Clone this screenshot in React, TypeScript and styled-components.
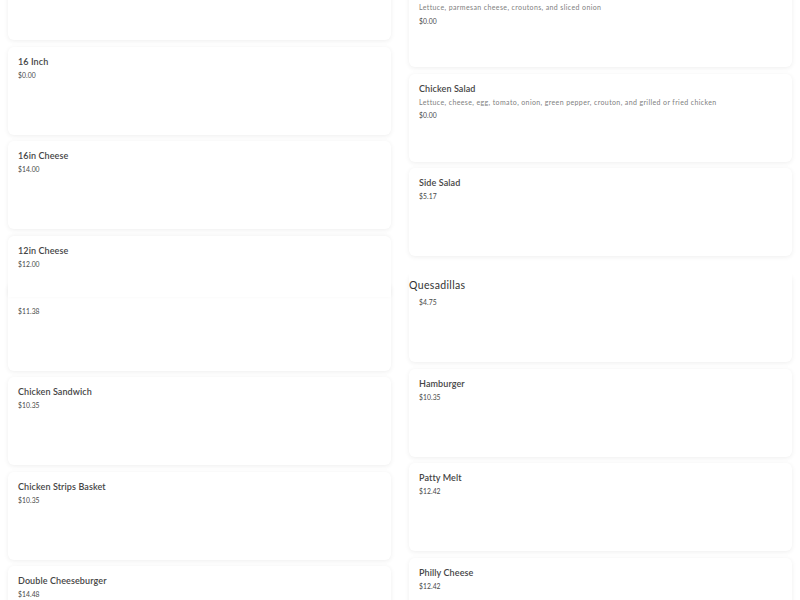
import React from "react";
import styled, { createGlobalStyle, css } from "styled-components";

const GlobalStyle = createGlobalStyle`
  html, body { margin: 0; padding: 0; background: #ffffff; overflow: hidden; }
  body { font-family: Lato, "Noto Sans", "Liberation Sans", sans-serif; color: #333; }
  * { box-sizing: border-box; }
`;

const Page = styled.div`
  display: grid;
  grid-template-columns: 383px 383px;
  column-gap: 18px;
  padding: 0 8px;
  height: 600px;
  overflow: hidden;
`;

const Column = styled.div<{ $offset: number }>`
  display: flex;
  flex-direction: column;
  gap: 6.5px;
  margin-top: ${(p) => p.$offset}px;
`;

const Card = styled.div<{ $overlap?: boolean; $underlap?: boolean; $headless?: boolean }>`
  position: relative;
  flex: 0 0 auto;
  height: 88px;
  padding: 10px 10px;
  background: #ffffff;
  border-radius: 6px;
  box-shadow: 0 1px 5px rgba(0, 0, 0, 0.07);
  overflow: hidden;
  ${(p) =>
    p.$headless &&
    css`
      padding-top: 23px;
    `}
  ${(p) =>
    p.$overlap &&
    css`
      z-index: 2;
      height: 61.5px;
      margin-bottom: -21px;
      border-bottom-left-radius: 0;
      border-bottom-right-radius: 0;
      box-shadow: 0 -1px 4px rgba(0, 0, 0, 0.05);
    `}
  ${(p) =>
    p.$underlap &&
    css`
      margin-top: -30.5px;
    `}
`;

const Title = styled.div`
  font-size: 9px;
  line-height: 10px;
  font-weight: 600;
  color: #454545;
  letter-spacing: 0.1px;
  margin-bottom: 3px;
  white-space: nowrap;
`;

const Desc = styled.div`
  font-size: 7px;
  line-height: 10px;
  color: #808080;
  letter-spacing: 0.38px;
  margin-bottom: 3.5px;
  white-space: nowrap;
`;

const Price = styled.div`
  font-size: 6.8px;
  line-height: 10px;
  color: #4a4a4a;
  letter-spacing: 0.05px;
`;

const SectionHeading = styled.h2`
  position: relative;
  z-index: 2;
  flex: 0 0 auto;
  margin: 0;
  height: 35.5px;
  padding-top: 14.5px;
  background: #ffffff;
  font-size: 10.5px;
  line-height: 16px;
  font-weight: 400;
  color: #333;
  letter-spacing: 0.35px;
`;

type Item = {
  title?: string;
  desc?: string;
  price?: string;
  overlap?: boolean;
  underlap?: boolean;
  heading?: string;
};

const left: Item[] = [
  {},
  { title: "16 Inch", price: "$0.00" },
  { title: "16in Cheese", price: "$14.00" },
  { title: "12in Cheese", price: "$12.00", overlap: true },
  { price: "$11.38" },
  { title: "Chicken Sandwich", price: "$10.35" },
  { title: "Chicken Strips Basket", price: "$10.35" },
  { title: "Double Cheeseburger", price: "$14.48" },
];

const right: Item[] = [
  {
    desc: "Lettuce, parmesan cheese, croutons, and sliced onion",
    price: "$0.00",
  },
  {
    title: "Chicken Salad",
    desc: "Lettuce, cheese, egg, tomato, onion, green pepper, crouton, and grilled or fried chicken",
    price: "$0.00",
  },
  { title: "Side Salad", price: "$5.17" },
  { heading: "Quesadillas", price: "$4.75", underlap: true },
  { title: "Hamburger", price: "$10.35" },
  { title: "Patty Melt", price: "$12.42" },
  { title: "Philly Cheese", price: "$12.42" },
];

const renderItems = (items: Item[]) =>
  items.map((it, i) => (
    <React.Fragment key={i}>
      {it.heading && <SectionHeading>{it.heading}</SectionHeading>}
      <Card $overlap={it.overlap} $underlap={it.underlap} $headless={!it.title}>
        {it.title && <Title>{it.title}</Title>}
        {it.desc && <Desc>{it.desc}</Desc>}
        {it.price && <Price>{it.price}</Price>}
      </Card>
    </React.Fragment>
  ));

export default function App() {
  return (
    <>
      <GlobalStyle />
      <Page>
        <Column $offset={-48}>{renderItems(left)}</Column>
        <Column $offset={-21}>{renderItems(right)}</Column>
      </Page>
    </>
  );
}
